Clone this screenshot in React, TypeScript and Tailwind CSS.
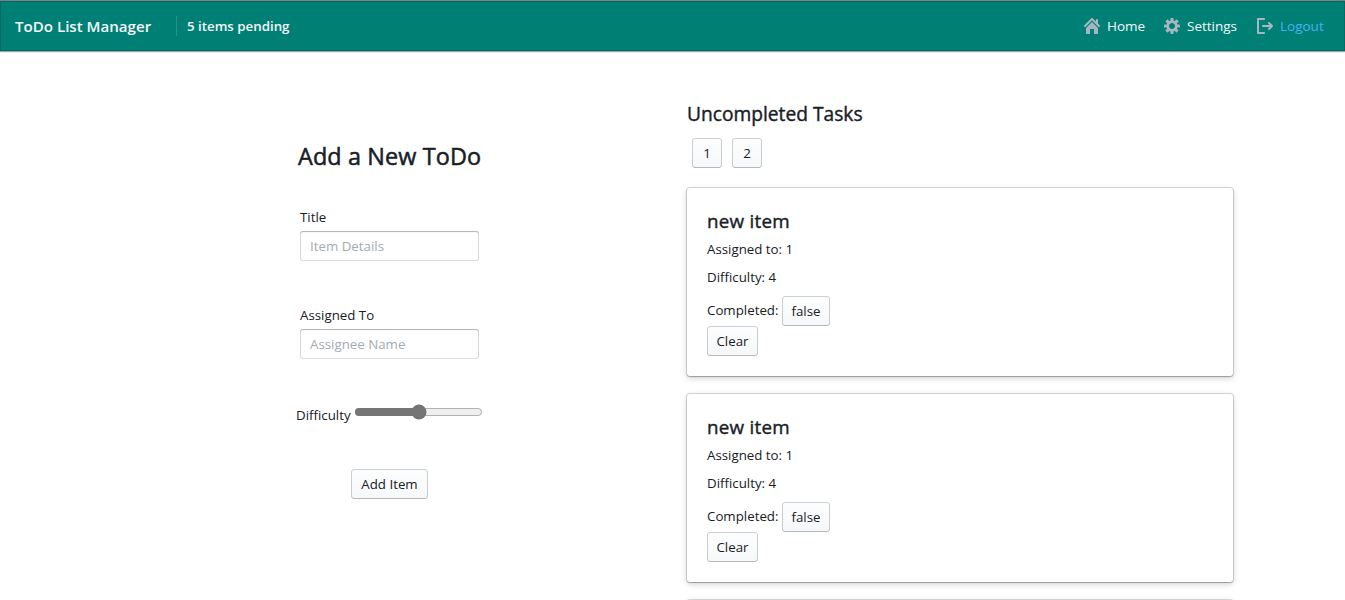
import React from "react";

const HOME =
  "M2 10v5c0 .55.45 1 1 1h3v-5h4v5h3c.55 0 1-.45 1-1v-5L8 4l-6 6zm13.71-2.71L14 5.59V2c0-.55-.45-1-1-1s-1 .45-1 1v1.59L8.71.29C8.53.11 8.28 0 8 0s-.53.11-.71.29l-7 7a1.003 1.003 0 001.42 1.42L8 2.41l6.29 6.29c.18.19.43.3.71.3a1.003 1.003 0 00.71-1.71z";
const COG =
  "M15.19 6.39h-1.85c-.11-.37-.27-.71-.45-1.04l1.36-1.36c.31-.31.31-.82 0-1.13l-1.13-1.13a.803.803 0 00-1.13 0l-1.36 1.36c-.33-.17-.67-.33-1.04-.44V.79c0-.44-.36-.8-.8-.8h-1.6c-.44 0-.8.36-.8.8v1.86c-.39.12-.75.28-1.1.47l-1.3-1.3c-.3-.3-.79-.3-1.09 0L1.82 2.91c-.3.3-.3.79 0 1.09l1.3 1.3c-.2.34-.36.7-.48 1.09H.79c-.44 0-.8.36-.8.8v1.6c0 .44.36.8.8.8h1.85c.11.37.27.71.45 1.04l-1.36 1.36c-.31.31-.31.82 0 1.13l1.13 1.13c.31.31.82.31 1.13 0l1.36-1.36c.33.18.67.33 1.04.44v1.86c0 .44.36.8.8.8h1.6c.44 0 .8-.36.8-.8v-1.86c.39-.12.75-.28 1.1-.47l1.3 1.3c.3.3.79.3 1.09 0l1.09-1.09c.3-.3.3-.79 0-1.09l-1.3-1.3c.19-.35.36-.71.48-1.1h1.85c.44 0 .8-.36.8-.8v-1.6a.816.816 0 00-.81-.79zm-7.2 4.6c-1.66 0-3-1.34-3-3s1.34-3 3-3 3 1.34 3 3-1.34 3-3 3z";
const LOGOUT =
  "M7 14H2V2h5c.55 0 1-.45 1-1s-.45-1-1-1H1C.45 0 0 .45 0 1v14c0 .55.45 1 1 1h6c.55 0 1-.45 1-1s-.45-1-1-1zm8.71-6.71l-3-3a1.003 1.003 0 00-1.42 1.42L12.59 7H6c-.55 0-1 .45-1 1s.45 1 1 1h6.59l-1.29 1.29c-.19.18-.3.43-.3.71a1.003 1.003 0 001.71.71l3-3c.18-.18.29-.43.29-.71 0-.28-.11-.53-.29-.71z";

function NavItem({ icon, label, className }: { icon: string; label: string; className: string }) {
  return (
    <a className={`flex h-[30px] items-center gap-[7px] text-[13.5px] ${className}`}>
      <svg width="16" height="16" viewBox="0 0 16 16" className="shrink-0 fill-[#a7b6c2]">
        <path fillRule="evenodd" d={icon} />
      </svg>
      <span className="pt-px">{label}</span>
    </a>
  );
}

function Button({ children, className }: { children: React.ReactNode; className: string }) {
  return (
    <button
      className={`flex h-[30px] shrink-0 items-center justify-center rounded-[3px] bg-[#f5f8fa] bg-linear-to-b from-white/80 to-white/0 leading-[18px] shadow-[inset_0_0_0_1px_rgba(16,22,26,0.2),inset_0_-1px_0_rgba(16,22,26,0.1)] ${className}`}
    >
      {children}
    </button>
  );
}

function Field({ label, placeholder, className }: { label: string; placeholder: string; className: string }) {
  return (
    <label className={`block w-[179px] ${className}`}>
      <span className="block h-[18px] leading-[18px]">{label}</span>
      <input
        placeholder={placeholder}
        className="mt-[5px] block h-[30px] w-full rounded-[3px] bg-white px-2.5 shadow-[inset_0_0_0_1px_rgba(16,22,26,0.15),inset_0_1px_1px_rgba(16,22,26,0.2)] outline-none placeholder:text-[#a3abb3]"
      />
    </label>
  );
}

function Card({ children }: { children?: React.ReactNode }) {
  return (
    <article className="mb-[18px] ml-px h-[188px] w-[546px] shrink-0 rounded-[3px] bg-white px-5 pt-5 shadow-[0_0_0_1px_rgba(16,22,26,0.15),0_1px_1px_rgba(16,22,26,0.2),0_2px_6px_rgba(16,22,26,0.2)]">
      {children}
    </article>
  );
}

function Task({ title, assignee, difficulty }: { title: string; assignee: number; difficulty: number }) {
  return (
    <Card>
      <h3 className="h-[26px] text-[18.8px] leading-[26px] tracking-[0.25px] [-webkit-text-stroke:0.4px]">{title}</h3>
      <p className="mt-[6px] h-[18px] leading-[18px]">Assigned to: {assignee}</p>
      <p className="mt-[10px] h-[18px] leading-[18px]">Difficulty: {difficulty}</p>
      <div className="mt-[10px] flex h-[30px]">
        <span className="w-[75px] leading-[28px]">Completed:</span>
        <Button className="w-12">false</Button>
      </div>
      <Button className="w-[51px]">Clear</Button>
    </Card>
  );
}

export default function App() {
  return (
    <div className="h-[600px] w-[1345px] overflow-hidden bg-white font-['Open_Sans','Noto_Sans',sans-serif] text-[13.3px] whitespace-nowrap text-[#182026]">
      <header className="flex h-[51px] items-center border-t border-[#7d8385] bg-[#008075] pr-[21px] pl-[15px] text-[#f5f8fa] shadow-[inset_0_0_0_1px_rgba(16,22,26,0.2),0_1px_1px_rgba(16,22,26,0.4)]">
        <span className="w-[161px] text-[15.1px] font-semibold">ToDo List Manager</span>
        <span className="h-5 w-px bg-white/15" />
        <span className="ml-[10px] pt-px text-[13.3px] font-semibold">5 items pending</span>
        <nav className="ml-auto flex">
          <NavItem icon={HOME} label="Home" className="w-20" />
          <NavItem icon={COG} label="Settings" className="w-[93px]" />
          <NavItem icon={LOGOUT} label="Logout" className="w-[67px] text-[#48aff0]" />
        </nav>
      </header>
      <main className="flex pl-[296px]">
        <section className="flex w-[390px] flex-col pt-[88px]">
          <h1 className="ml-[2px] h-[34px] text-[23.4px] leading-[34px] tracking-[0.13px] [-webkit-text-stroke:0.5px]">Add a New ToDo</h1>
          <Field label="Title" placeholder="Item Details" className="mt-[35px] ml-1" />
          <Field label="Assigned To" placeholder="Assignee Name" className="mt-[45px] ml-1" />
          <div className="mt-[43px] flex h-[26px]">
            <span className="w-[58px] leading-[26px]">Difficulty</span>
            <input
              type="range"
              min={1}
              max={9}
              defaultValue={5}
              className="m-0 mt-[2px] h-4 w-[129px] accent-[#757575]"
            />
          </div>
          <Button className="mt-[41px] ml-[55px] w-[77px]">Add Item</Button>
        </section>
        <section className="flex h-[549px] w-[548px] flex-col pt-[50px]">
          <h2 className="ml-px h-[26px] text-[19.2px] leading-[26px] [-webkit-text-stroke:0.4px]">Uncompleted Tasks</h2>
          <div className="mt-[11px] mb-[20px] ml-[6px] flex gap-[10px]">
            <Button className="w-[30px]">1</Button>
            <Button className="w-[30px]">2</Button>
          </div>
          <Task title="new item" assignee={1} difficulty={4} />
          <Task title="new item" assignee={1} difficulty={4} />
          <Card />
        </section>
      </main>
    </div>
  );
}
